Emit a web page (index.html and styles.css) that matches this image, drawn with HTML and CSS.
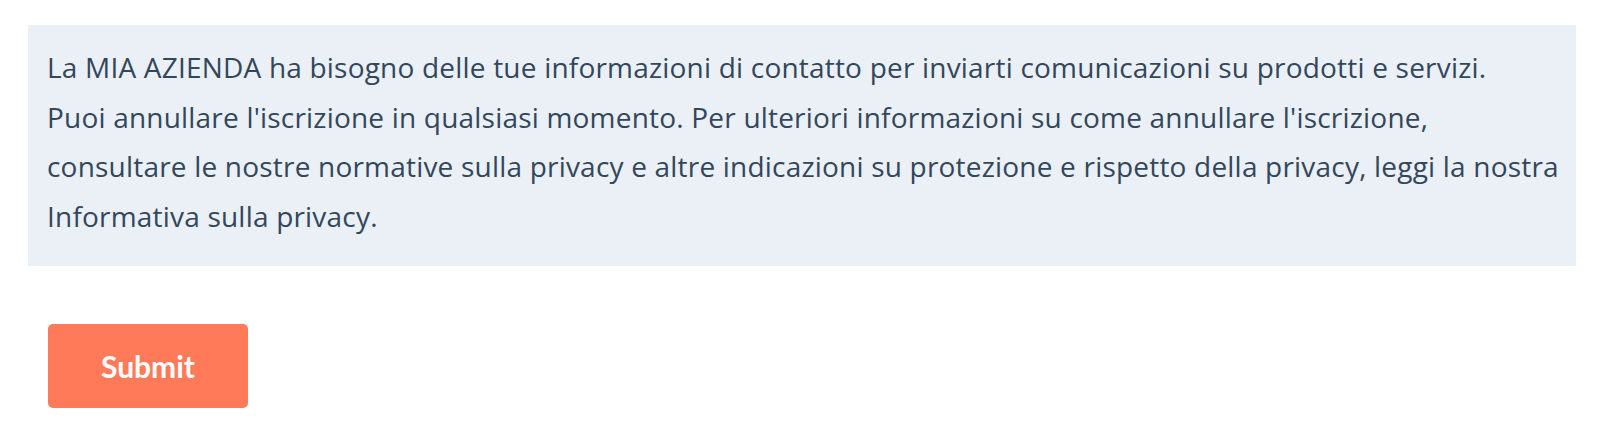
FILE: index.html
```html
<!DOCTYPE html>
<html lang="it">
<head>
<meta charset="utf-8">
<link rel="stylesheet" href="styles.css">
</head>
<body>
<form class="form">
  <div class="notice">
    <p class="notice-text">La MIA AZIENDA ha bisogno delle tue informazioni di contatto per inviarti comunicazioni su prodotti e servizi.<br>Puoi annullare l'iscrizione in qualsiasi momento. Per ulteriori informazioni su come annullare l'iscrizione,<br>consultare le nostre normative sulla privacy e altre indicazioni su protezione e rispetto della privacy, leggi la nostra<br>Informativa sulla privacy.</p>
  </div>
  <div class="actions">
    <button type="button" class="submit">Submit</button>
  </div>
</form>
</body>
</html>
```
FILE: styles.css
```css
html, body {
  margin: 0;
  background: #ffffff;
}
.form {
  padding: 25px 24px 0 28px;
}
.notice {
  background: #eaf0f6;
  padding: 18px 4px 24px 19px;
}
.notice-text {
  margin: 0;
  color: #33475b;
  font-family: "Open Sans", "Noto Sans", sans-serif;
  font-size: 28px;
  line-height: 49.67px;
  letter-spacing: 0.2px;
  white-space: nowrap;
}
.actions {
  padding: 58px 0 0 20px;
}
.submit {
  width: 200px;
  height: 84px;
  border: 0;
  border-radius: 5px;
  background: #ff7a59;
  color: #ffffff;
  font-family: Lato, "Noto Sans", sans-serif;
  font-weight: 700;
  font-size: 30px;
  padding: 0;
}
```
